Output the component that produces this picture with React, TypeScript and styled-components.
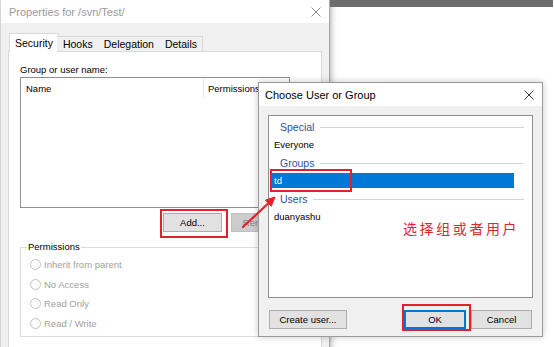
import styled, { createGlobalStyle } from "styled-components";

const UI = `"Liberation Sans", Arial, sans-serif`;

const GlobalStyle = createGlobalStyle`
  html, body {
    margin: 0;
    padding: 0;
    background: #ffffff;
    font-family: ${UI};
  }
  #root {
    width: 554px;
    height: 347px;
    overflow: hidden;
  }
`;

const tabs = ["Security", "Hooks", "Delegation", "Details"];
const radios = ["Inherit from parent", "No Access", "Read Only", "Read / Write"];

const CloseIcon = ({ color }: { color: string }) => (
  <svg width="10" height="10" viewBox="0 0 10 10">
    <path d="M0.5 0.5 L9.5 9.5 M9.5 0.5 L0.5 9.5" stroke={color} strokeWidth="1" fill="none" />
  </svg>
);

export default function App() {
  return (
    <>
      <GlobalStyle />
      <Desktop>
        <PropsWindow>
          <TitleBar>
            <TitleText inactive>Properties for /svn/Test/</TitleText>
            <CloseIcon color="#8c8c8c" />
          </TitleBar>
          <WindowBody>
            <TabStrip>
              {tabs.map((t, i) => (
                <Tab key={t} selected={i === 0}>
                  {t}
                </Tab>
              ))}
            </TabStrip>
            <TabPanel>
              <FieldLabel>Group or user name:</FieldLabel>
              <ListView>
                <ListHeader>
                  <HeaderCell width={183} divider>
                    Name
                  </HeaderCell>
                  <HeaderCell>Permissions</HeaderCell>
                </ListHeader>
              </ListView>
              <ButtonRow>
                <Button width={59}>Add...</Button>
                <Button width={59} disabled>
                  Remove
                </Button>
              </ButtonRow>
              <GroupBox>
                <Legend>Permissions</Legend>
                {radios.map((r) => (
                  <RadioRow key={r}>
                    <RadioDot />
                    <span>{r}</span>
                  </RadioRow>
                ))}
              </GroupBox>
            </TabPanel>
          </WindowBody>
        </PropsWindow>

        <BackArea>
          <BackTopBar />
        </BackArea>

        <ChooseDialog>
          <DialogTitle>
            <TitleText>Choose User or Group</TitleText>
            <CloseIcon color="#3a3a3a" />
          </DialogTitle>
          <DialogBody>
            <ChooseList>
              <GroupHeader>Special</GroupHeader>
              <Item>Everyone</Item>
              <GroupHeader>Groups</GroupHeader>
              <Item selected>td</Item>
              <GroupHeader>Users</GroupHeader>
              <Item>duanyashu</Item>
            </ChooseList>
            <DialogButtons>
              <Button width={78}>Create user...</Button>
              <RightButtons>
                <Button width={62} primary>
                  OK
                </Button>
                <Button width={61}>Cancel</Button>
              </RightButtons>
            </DialogButtons>
          </DialogBody>
        </ChooseDialog>

        <Highlight style={{ left: 160, top: 209, width: 68, height: 29 }} />
        <Highlight style={{ left: 270, top: 169, width: 82, height: 23 }} />
        <Highlight style={{ left: 402, top: 304, width: 69, height: 27 }} />

        <ArrowSvg width="42" height="40" viewBox="0 0 42 40">
          <path d="M5 34 L30.4 10.2" stroke="#e5202b" strokeWidth="2.2" strokeLinecap="round" />
          <path d="M37 4 L33.3 13.3 L27.5 7.1 Z" fill="#e5202b" stroke="#e5202b" strokeWidth="1" />
        </ArrowSvg>

        <Annotation>选择组或者用户</Annotation>
      </Desktop>
    </>
  );
}

const Desktop = styled.div`
  position: relative;
  display: flex;
  width: 554px;
  height: 347px;
  overflow: hidden;
`;

const PropsWindow = styled.div`
  width: 328px;
  height: 100%;
  flex-shrink: 0;
  display: flex;
  flex-direction: column;
  background: #f0f0f0;
  border-left: 1px solid #d4d4d4;
  border-right: 1px solid #a9a9a9;
`;

const TitleBar = styled.div`
  height: 23px;
  flex-shrink: 0;
  display: flex;
  align-items: center;
  justify-content: space-between;
  padding: 0 8px 0 8px;
  background: #ffffff;
`;

const TitleText = styled.span<{ inactive?: boolean }>`
  font-size: 11px;
  color: ${(p) => (p.inactive ? "#9a9a9a" : "#000000")};
`;

const WindowBody = styled.div`
  flex: 1;
  padding: 10px 7px 0 7px;
  display: flex;
  flex-direction: column;
`;

const TabStrip = styled.div`
  display: flex;
  align-items: flex-end;
  height: 19px;
  margin-bottom: -1px;
  padding-left: 1px;
  position: relative;
  z-index: 1;
`;

const Tab = styled.div<{ selected?: boolean }>`
  font-size: 10.5px;
  display: flex;
  align-items: center;
  box-sizing: border-box;
  border: 1px solid #d9d9d9;
  border-bottom: ${(p) => (p.selected ? "none" : "1px solid #d9d9d9")};
  background: ${(p) => (p.selected ? "#ffffff" : "#f0f0f0")};
  height: ${(p) => (p.selected ? "19px" : "16px")};
  padding: ${(p) => (p.selected ? "0 5px 1px 5px" : "0 5px 0 6px")};
  margin: ${(p) => (p.selected ? "0 -1px 0 0" : "0 0 0 -1px")};
  color: #000;
  & + & {
    border-left: none;
  }
`;

const TabPanel = styled.div`
  flex: 1;
  background: #ffffff;
  border: 1px solid #d9d9d9;
  border-bottom: none;
  padding: 12px 11px 0 11px;
  display: flex;
  flex-direction: column;
`;

const FieldLabel = styled.div`
  font-size: 9.5px;
  line-height: 12px;
  color: #000;
  margin-bottom: 1px;
`;

const ListView = styled.div`
  width: 270px;
  height: 131px;
  box-sizing: border-box;
  border: 1px solid #8f8f8f;
  background: #ffffff;
`;

const ListHeader = styled.div`
  display: flex;
  height: 20px;
`;

const HeaderCell = styled.div<{ width?: number; divider?: boolean }>`
  font-size: 9.5px;
  display: flex;
  align-items: center;
  padding-left: ${(p) => (p.width ? "5px" : "4px")};
  width: ${(p) => (p.width ? `${p.width}px` : "auto")};
  box-sizing: border-box;
  border-right: ${(p) => (p.divider ? "1px solid #e5e5e5" : "none")};
  color: #000;
`;

const ButtonRow = styled.div`
  width: 270px;
  display: flex;
  justify-content: flex-end;
  gap: 9px;
  margin-top: 5px;
`;

const Button = styled.div<{ width: number; disabled?: boolean; primary?: boolean }>`
  width: ${(p) => p.width}px;
  height: 19px;
  box-sizing: border-box;
  display: flex;
  align-items: center;
  justify-content: center;
  font-size: 9.5px;
  background: ${(p) => (p.disabled ? "#cccccc" : "#e1e1e1")};
  border: 1px solid ${(p) => (p.primary ? "#0078d7" : p.disabled ? "#bfbfbf" : "#adadad")};
  box-shadow: ${(p) => (p.primary ? "inset 0 0 0 1px #0078d7" : "none")};
  color: ${(p) => (p.disabled ? "#838383" : "#000")};
`;

const GroupBox = styled.fieldset`
  width: 270px;
  box-sizing: border-box;
  margin: 9px 0 0 0;
  padding: 2px 0 3px 9px;
  border: 1px solid #dcdcdc;
  min-width: 0;
`;

const Legend = styled.legend`
  font-size: 9.5px;
  line-height: 12px;
  padding: 0 1px;
  margin-left: -3px;
  color: #000;
`;

const RadioRow = styled.div`
  display: flex;
  align-items: center;
  gap: 3px;
  height: 19.6px;
  font-size: 9.5px;
  color: #a0a0a0;
`;

const RadioDot = styled.span`
  width: 11px;
  height: 11px;
  box-sizing: border-box;
  border-radius: 50%;
  border: 1px solid #c4c4c4;
  background: #fbfbfb;
`;

const BackArea = styled.div`
  flex: 1;
  display: flex;
  flex-direction: column;
  background: linear-gradient(to right, #c9c9c9 0px, #ececec 3px, #ffffff 7px);
`;

const BackTopBar = styled.div`
  height: 7px;
  background: #6d6d6d;
  margin-right: 1px;
`;

const ChooseDialog = styled.div`
  position: absolute;
  left: 258px;
  top: 82px;
  width: 285px;
  height: 255px;
  box-sizing: border-box;
  border: 1px solid #9b9b9b;
  background: #f0f0f0;
  display: flex;
  flex-direction: column;
  box-shadow: 0 0 7px rgba(0, 0, 0, 0.22);
`;

const DialogTitle = styled.div`
  height: 23px;
  flex-shrink: 0;
  display: flex;
  align-items: center;
  justify-content: space-between;
  padding: 0 8px 0 6px;
  background: #ffffff;
`;

const DialogBody = styled.div`
  flex: 1;
  padding: 9px 9px 0 9px;
  display: flex;
  flex-direction: column;
`;

const ChooseList = styled.div`
  height: 183px;
  box-sizing: border-box;
  border: 1px solid #8f8f8f;
  background: #ffffff;
  padding-top: 1px;
  display: flex;
  flex-direction: column;
`;

const GroupHeader = styled.div`
  height: 20px;
  display: flex;
  align-items: center;
  gap: 6px;
  margin: 0 8px 0 11px;
  font-size: 10.5px;
  color: #2f4fa6;
  &::after {
    content: "";
    flex: 1;
    height: 1px;
    background: #c9d7ec;
  }
`;

const Item = styled.div<{ selected?: boolean }>`
  height: 15px;
  width: 242px;
  margin: 0 0 1px 3px;
  padding-left: 2px;
  box-sizing: border-box;
  display: flex;
  align-items: center;
  font-size: 9.5px;
  background: ${(p) => (p.selected ? "#0078d7" : "transparent")};
  color: ${(p) => (p.selected ? "#ffffff" : "#000000")};
`;

const DialogButtons = styled.div`
  display: flex;
  justify-content: space-between;
  margin-top: 12px;
  padding-left: 1px;
`;

const RightButtons = styled.div`
  display: flex;
  gap: 5px;
  margin-right: 1px;
`;

const Highlight = styled.div`
  position: absolute;
  box-sizing: border-box;
  border: 2px solid #e3202c;
  pointer-events: none;
`;

const ArrowSvg = styled.svg`
  position: absolute;
  left: 238px;
  top: 193px;
  overflow: visible;
`;

const Annotation = styled.div`
  position: absolute;
  left: 403px;
  top: 219px;
  font-family: "Noto Sans CJK SC", sans-serif;
  font-size: 14px;
  line-height: 18px;
  letter-spacing: 2.6px;
  color: #e0262c;
`;
